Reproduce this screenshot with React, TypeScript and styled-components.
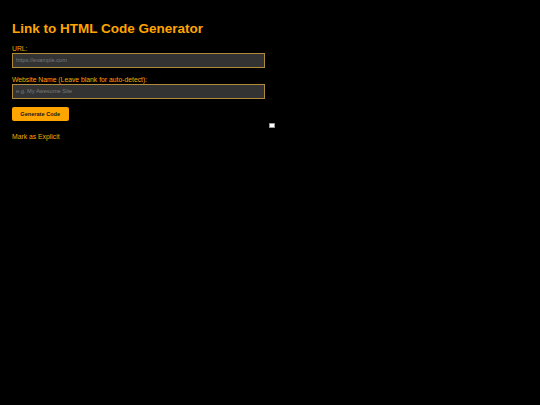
import React from "react";
import styled, { createGlobalStyle } from "styled-components";

const GlobalStyle = createGlobalStyle`
  html, body {
    margin: 0;
    padding: 0;
    background: #000000;
  }
  body {
    font-family: "Liberation Sans", Arial, sans-serif;
  }
`;

const Page = styled.div`
  min-height: 405px;
  padding: 20.5px 12px;
  box-sizing: border-box;
  background: #000000;
  color: #ffa500;
  font-size: 6.8px;
`;

const Title = styled.h1`
  margin: 0 0 9.5px;
  font-size: 13.5px;
  font-weight: bold;
  color: #ffa500;
`;

const Form = styled.form`
  display: flex;
  flex-direction: column;
  align-items: flex-start;
`;

const Label = styled.label`
  display: block;
  color: #ffa500;
  line-height: 7.8px;
`;

const TextInput = styled.input`
  box-sizing: border-box;
  width: 252.5px;
  height: 15px;
  margin: 0 0 8px;
  padding: 0 3px;
  border: 1px solid #b28a3c;
  border-radius: 0;
  background: #333333;
  color: #dddddd;
  font-family: "Liberation Sans", Arial, sans-serif;
  font-size: 5.7px;
  outline: none;

  &::placeholder {
    color: #7a7a7a;
  }
`;

const Button = styled.button`
  box-sizing: border-box;
  width: 56.5px;
  height: 14.5px;
  margin: 0 0 1.5px;
  padding: 0;
  border: none;
  border-radius: 2px;
  background: #ffa500;
  color: #1a1a1a;
  font-family: "Liberation Sans", Arial, sans-serif;
  font-size: 5.6px;
  font-weight: bold;
  cursor: pointer;
`;

const CheckRow = styled.div`
  display: flex;
  justify-content: center;
  width: 100%;
  padding-left: 3.5px;
  box-sizing: border-box;
`;

const Check = styled.input`
  appearance: none;
  -webkit-appearance: none;
  box-sizing: border-box;
  width: 5.5px;
  height: 5.5px;
  margin: 0;
  border: 0.6px solid #9a9a9a;
  border-radius: 0.8px;
  background: #ffffff;
`;

const CheckLabel = styled.label`
  display: block;
  margin-top: 5px;
  line-height: 7.8px;
  color: #ffa500;
`;

const App: React.FC = () => {
  return (
    <Page>
      <GlobalStyle />
      <Title>Link to HTML Code Generator</Title>
      <Form onSubmit={(e) => e.preventDefault()}>
        <Label htmlFor="url">URL:</Label>
        <TextInput id="url" type="text" placeholder="https://example.com" />
        <Label htmlFor="site">Website Name (Leave blank for auto-detect):</Label>
        <TextInput id="site" type="text" placeholder="e.g. My Awesome Site" />
        <Button type="submit">Generate Code</Button>
        <CheckRow>
          <Check id="explicit" type="checkbox" />
        </CheckRow>
        <CheckLabel htmlFor="explicit">Mark as Explicit</CheckLabel>
      </Form>
    </Page>
  );
};

export default App;
